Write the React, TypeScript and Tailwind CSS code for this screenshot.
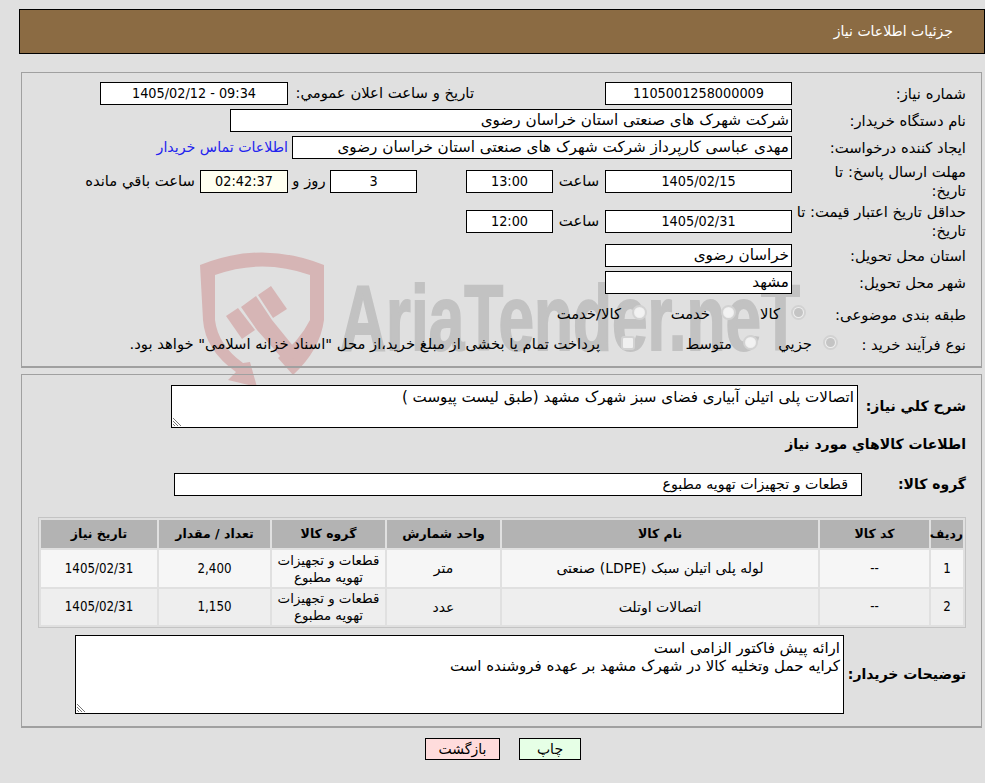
import type { ReactNode } from "react";

const num = "font-['DejaVu_Sans_Condensed','DejaVu_Sans',sans-serif] text-[14.3px]";

function Box({ w, children, center, bg, mono }: { w: string; children?: ReactNode; center?: boolean; bg?: string; mono?: boolean }) {
  return (
    <div
      className={`${w} h-[23px] shrink-0 border border-black px-[2px] leading-[20px] whitespace-nowrap overflow-hidden ${center ? "text-center" : "text-right"} ${mono ? num : "text-[15.2px]"} ${bg ?? "bg-white"}`}
    >
      {children}
    </div>
  );
}

function Row({ label, className, children }: { label: string; className: string; children?: ReactNode }) {
  return (
    <div className={`flex items-center ${className}`}>
      <div className="w-[174px] shrink-0 leading-[19px] pl-1">{label}</div>
      {children}
    </div>
  );
}

function Radio({ checked }: { checked?: boolean }) {
  return (
    <span className="relative -top-[2px] inline-flex w-[15px] h-[15px] shrink-0 items-center justify-center rounded-full border-2 border-[#d2d2d2] bg-[#eeeeee]">
      <span className={`w-[9px] h-[9px] rounded-full ${checked ? "bg-[#c4c4c4]" : "bg-[#f2f2f2]"}`} />
    </span>
  );
}

function Option({ w, label, checked }: { w: string; label: string; checked?: boolean }) {
  return (
    <div className={`${w} shrink-0 flex items-center gap-[11px] whitespace-nowrap`}>
      <Radio checked={checked} />
      <span>{label}</span>
    </div>
  );
}

function Watermark() {
  return (
    <svg className="absolute left-[190px] top-[240px] w-[640px] h-[160px]" viewBox="190 240 640 160">
      <path
        fill="#d6b5b5"
        d="M200 265 Q262 240 324 265 L324 320 Q320 350 293 375 L278 358 Q300 340 310 320 L310 275 Q262 258 215 275 L215 320 Q218 345 243 363 L250 362 L257 387 L228 380 L236 372 Q205 350 203 320 Z"
      />
      <path fill="#d6b5b5" d="M226 316 L238 308 L255 330 L242 339 Z" />
      <path fill="#d6b5b5" d="M241 307 L256 296 L272 320 L298 352 L288 365 L257 330 Z" />
      <path fill="#d6b5b5" d="M258 295 L271 286 L287 309 L273 318 Z" />
      <text
        x="340"
        y="350"
        direction="ltr"
        fill="#c2c2c2"
        stroke="#c2c2c2"
        strokeWidth="2"
        fontFamily="'Liberation Sans', sans-serif"
        fontWeight="700"
        fontSize="93"
        textLength="460"
        lengthAdjust="spacingAndGlyphs"
      >
        AriaTender.neT
      </text>
    </svg>
  );
}

function Grip() {
  return (
    <svg className="absolute left-0 bottom-0 w-[11px] h-[11px]" viewBox="0 0 11 11">
      <path d="M1 2 L9 10 M1 5 L6 10 M1 8 L3 10" stroke="#777" strokeWidth="1" fill="none" />
    </svg>
  );
}

const items = [
  { id: "1", code: "--", name: "لوله پلی اتیلن سبک (LDPE) صنعتی", unit: "متر", qty: "2,400", date: "1405/02/31", bg: "bg-[#f6f6f6]", h: "h-[37px]" },
  { id: "2", code: "--", name: "اتصالات اوتلت", unit: "عدد", qty: "1,150", date: "1405/02/31", bg: "bg-[#eeeeee]", h: "h-[36px]" },
];

const tableNum = "font-['DejaVu_Sans_Condensed','DejaVu_Sans',sans-serif] text-[13.2px]";

export default function App() {
  return (
    <div dir="rtl" className="relative w-[985px] h-[783px] overflow-hidden bg-[#e0e0e0] text-[14.8px] text-black font-['DejaVu_Sans',sans-serif]">
      <Watermark />
      <div className="relative">
        <div className="pt-[9px]">
          <div className="w-[966px] h-[45px] border border-black bg-[#8b6b43] text-white text-[14px] pr-[31px] leading-[43px]">
            جزئیات اطلاعات نیاز
          </div>
        </div>

        <div className="mt-[18px] mr-[3px] w-[961px] h-[296px] border border-[#a0a0a0] border-b-2 pt-[9px] pr-[15px]">
          <Row label="شماره نیاز:" className="h-[23px]">
            <Box w="w-[187px]" center mono>1105001258000009</Box>
            <div className="w-[131px] shrink-0" />
            <div className="w-[186px] shrink-0 whitespace-nowrap">تاریخ و ساعت اعلان عمومي:</div>
            <Box w="w-[188px]" center mono><span dir="ltr">1405/02/12 - 09:34</span></Box>
          </Row>
          <Row label="نام دستگاه خریدار:" className="h-[23px] mt-[4px]">
            <Box w="w-[562px]">شرکت شهرک های صنعتی استان خراسان رضوی</Box>
          </Row>
          <Row label="ایجاد کننده درخواست:" className="h-[23px] mt-[4px]">
            <Box w="w-[500px]">مهدی عباسی کارپرداز شرکت شهرک های صنعتی استان خراسان رضوی</Box>
            <a className="mr-[4px] text-[14.2px] text-[#2222ee] whitespace-nowrap">اطلاعات تماس خریدار</a>
          </Row>
          <Row label="مهلت ارسال پاسخ: تا تاریخ:" className="h-[42px] mt-[1px]">
            <Box w="w-[187px]" center mono>1405/02/15</Box>
            <div className="w-[52px] shrink-0 text-center">ساعت</div>
            <Box w="w-[87px]" center mono>13:00</Box>
            <div className="w-[49px] shrink-0" />
            <Box w="w-[87px]" center mono>3</Box>
            <div className="w-[42px] shrink-0 text-center">روز و</div>
            <Box w="w-[88px]" center mono bg="bg-[#fffff0]">02:42:37</Box>
            <div className="mr-[5px] whitespace-nowrap">ساعت باقي مانده</div>
          </Row>
          <Row label="حداقل تاریخ اعتبار قیمت: تا تاریخ:" className="h-[42px] mt-[-2px]">
            <Box w="w-[187px]" center mono>1405/02/31</Box>
            <div className="w-[52px] shrink-0 text-center">ساعت</div>
            <Box w="w-[87px]" center mono>12:00</Box>
          </Row>
          <Row label="استان محل تحویل:" className="h-[23px] mt-[2px]">
            <Box w="w-[187px]">خراسان رضوی</Box>
          </Row>
          <Row label="شهر محل تحویل:" className="h-[23px] mt-[4px]">
            <Box w="w-[187px]">مشهد</Box>
          </Row>
          <Row label="طبقه بندی موضوعی:" className="h-[23px] mt-[9px]">
            <div className="flex items-center mr-[-14px]">
              <Option w="w-[70px]" label="کالا" checked />
              <Option w="w-[89px]" label="خدمت" />
              <Option w="w-[110px]" label="کالا/خدمت" />
            </div>
          </Row>
          <Row label="نوع فرآیند خرید :" className="h-[23px] mt-[7px]">
            <div className="flex items-center mr-[-46px]">
              <Option w="w-[80px]" label="جزيي" checked />
              <Option w="w-[123px]" label="متوسط" />
              <span className="relative -top-[2px] w-[14px] h-[14px] shrink-0 rounded-[3px] border-2 border-[#d2d2d2] bg-[#f0f0f0]" />
              <span className="mr-[21px] text-[14.75px] whitespace-nowrap">پرداخت تمام یا بخشی از مبلغ خرید،از محل "اسناد خزانه اسلامی" خواهد بود.</span>
            </div>
          </Row>
        </div>

        <div className="mt-[6px] mr-[3px] w-[961px] h-[354px] border border-[#a0a0a0] border-b-2 pt-[10px] pr-[15px]">
          <div className="flex items-center">
            <div className="w-[108px] shrink-0 text-[14px] font-bold">شرح کلي نیاز:</div>
            <div className="relative w-[687px] h-[43px] border border-black bg-white px-[3px] text-[15.1px] leading-[22px] whitespace-nowrap">
              اتصالات پلی اتیلن آبیاری فضای سبز شهرک مشهد (طبق لیست پیوست )
              <Grip />
            </div>
          </div>
          <div className="mt-[5px] h-[22px] text-[14px] font-bold leading-[22px]">اطلاعات کالاهاي مورد نیاز</div>
          <div className="mt-[18px] flex items-center">
            <div className="w-[104px] shrink-0 text-[14px] font-bold">گروه کالا:</div>
            <div className="w-[688px] h-[23px] border border-black bg-white pr-[13px] text-[14.2px] leading-[20px]">قطعات و تجهیزات تهویه مطبوع</div>
          </div>
          <table className="mt-[21px] w-[928px] table-fixed border-separate border-spacing-[2px] border border-[#c4c4c4] text-center text-[14px]">
            <colgroup>
              <col className="w-[32px]" />
              <col className="w-[109px]" />
              <col className="w-[316px]" />
              <col className="w-[113px]" />
              <col className="w-[113px]" />
              <col className="w-[111px]" />
              <col className="w-[116px]" />
            </colgroup>
            <thead>
              <tr className="h-[28px] bg-[#b3b3b3] text-[12.5px]">
                {["ردیف", "کد کالا", "نام کالا", "واحد شمارش", "گروه کالا", "تعداد / مقدار", "تاریخ نیاز"].map((h) => (
                  <th key={h} className="font-bold p-0 whitespace-nowrap">{h}</th>
                ))}
              </tr>
            </thead>
            <tbody>
              {items.map((it) => (
                <tr key={it.id} className={`${it.h} ${it.bg}`}>
                  <td className={`p-0 ${tableNum}`}>{it.id}</td>
                  <td className={`p-0 ${tableNum}`}>{it.code}</td>
                  <td className="p-0">{it.name}</td>
                  <td className="p-0">{it.unit}</td>
                  <td className="p-0 text-[13.4px] leading-[17px]">قطعات و تجهیزات تهویه مطبوع</td>
                  <td className={`p-0 ${tableNum}`}>{it.qty}</td>
                  <td className={`p-0 ${tableNum}`}>{it.date}</td>
                </tr>
              ))}
            </tbody>
          </table>
          <div className="mt-[7px] flex items-center">
            <div className="w-[122px] shrink-0 text-[14px] font-bold whitespace-nowrap">توضیحات خریدار:</div>
            <div className="relative w-[769px] h-[79px] border border-black bg-white px-[3px] text-[15px] leading-[18px] whitespace-nowrap">
              <div className="mt-[3px]">ارائه پیش فاکتور الزامی است</div>
              <div>کرایه حمل وتخلیه کالا در شهرک مشهد بر عهده فروشنده است</div>
              <Grip />
            </div>
          </div>
        </div>

        <div className="mt-[10px] flex justify-center gap-[19px] pl-[21px]">
          <button className="w-[62px] h-[22px] border border-black bg-[#e6ffe6] text-[14px] leading-[18px]">چاپ</button>
          <button className="w-[75px] h-[22px] border border-black bg-[#ffdcdc] text-[14px] leading-[18px]">بازگشت</button>
        </div>
      </div>
    </div>
  );
}
